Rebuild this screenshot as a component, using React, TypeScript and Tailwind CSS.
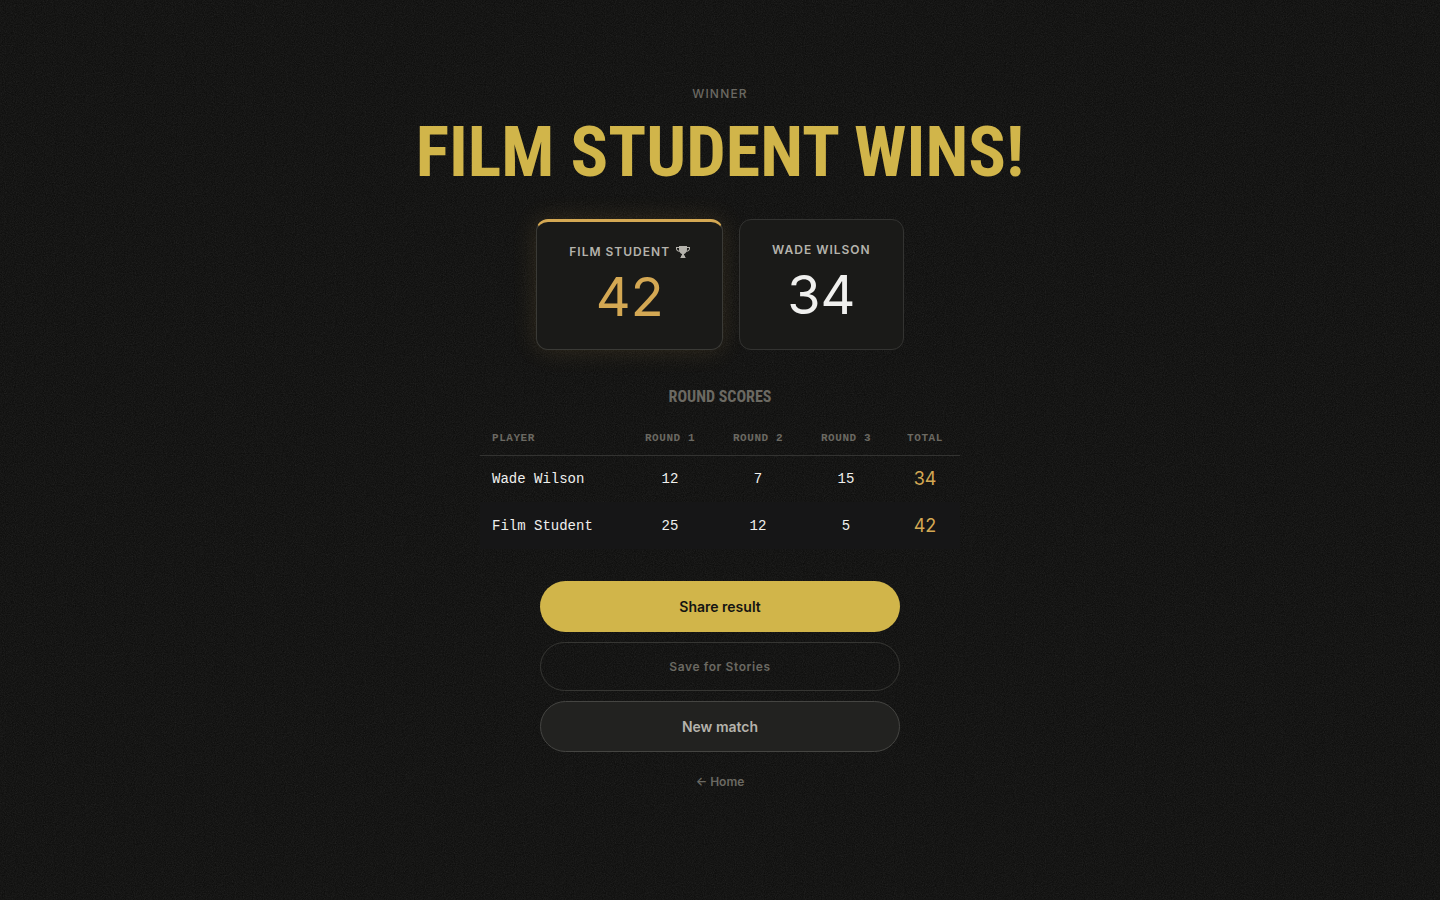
import { useState } from 'react'

interface Player {
  name: string
  rounds: number[]
}

const players: Player[] = [
  { name: 'Wade Wilson', rounds: [12, 7, 15] },
  { name: 'Film Student', rounds: [25, 12, 5] },
]

const total = (player: Player) => player.rounds.reduce((sum, n) => sum + n, 0)

function Trophy() {
  return (
    <svg viewBox="0 0 14 12" className="w-3.5 h-3" fill="currentColor" aria-hidden="true">
      <path d="M3 0h8v1h3v1.500c0 1.900-1.300 3-3.500 3.300C9.900 7 9 7.700 8 8v1.500h1V11h.5v1h-5v-1H5V9.500h1V8C5 7.700 4.100 7 3.500 5.800 1.300 5.500 0 4.400 0 2.500V1h3V0Zm0 2H1v.5c0 1.100.7 1.900 2.100 2.200C3 4 3 3 3 2Zm8 0c0 1 0 2-.1 2.700C12.300 4.400 13 3.600 13 2.500V2h-2Z" />
    </svg>
  )
}

// Film grain over the page background
function Grain() {
  return (
    <svg className="pointer-events-none absolute inset-0 -z-10 h-full w-full opacity-12" aria-hidden="true">
      <filter id="grain" x="0" y="0" width="100%" height="100%">
        <feTurbulence type="fractalNoise" baseFrequency="0.9" numOctaves="4" stitchTiles="stitch" />
        <feColorMatrix type="saturate" values="0" />
      </filter>
      <rect width="100%" height="100%" filter="url(#grain)" />
    </svg>
  )
}

function ScoreCard({ player, winner }: { player: Player; winner: boolean }) {
  return (
    <div
      className={`rounded-xl border bg-[#1a1a18] px-8 pt-5 pb-[17px] text-center ${
        winner
          ? 'border-[#3a3a36] border-t-[3px] border-t-[#d4a853] shadow-[0_0_24px_rgba(212,168,83,0.15)]'
          : 'border-[#333331]'
      }`}
    >
      <div className="flex items-center justify-center gap-1.5 text-xs leading-5 font-semibold tracking-[1px] text-[#b5b3ac]">
        {player.name.toUpperCase()}
        {winner && <Trophy />}
      </div>
      <div className={`text-[54px] leading-[70px] ${winner ? 'text-[#d4a853]' : 'text-[#f0f0ee]'}`}>
        {total(player)}
      </div>
    </div>
  )
}

export default function App() {
  const [shared, setShared] = useState(false)
  const winner = players.reduce((best, p) => (total(p) > total(best) ? p : best))
  const ranking = [...players].sort((a, b) => total(b) - total(a))

  return (
    <main className="relative isolate min-h-screen bg-[#0b0b0a] px-6 pt-21 pb-24 flex flex-col items-center font-['Inter',sans-serif]">
      <Grain />

      {/* Winner */}
      <p className="text-xs leading-5 font-medium tracking-widest text-[#6b6962]">WINNER</p>
      <h1 className="mt-2 text-center text-[70px] leading-20 font-bold text-[#d1b54a] font-['Roboto_Condensed','Liberation_Sans_Narrow',sans-serif]">
        {winner.name.toUpperCase()} WINS!
      </h1>

      {/* Final scores */}
      <div className="mt-[27px] flex gap-4">
        {ranking.map((player) => (
          <ScoreCard key={player.name} player={player} winner={player === winner} />
        ))}
      </div>

      {/* Round scores */}
      <section className="mt-9 w-full max-w-120">
        <h2 className="text-center text-base leading-[22px] font-bold text-[#6b6962] font-['Roboto_Condensed','Liberation_Sans_Narrow',sans-serif]">
          ROUND SCORES
        </h2>
        <table className="mt-[15px] w-full table-fixed font-['Liberation_Mono',monospace] text-sm text-[#f0f0ee]">
          <thead>
            <tr className="h-8 border-b border-[#333331] text-[11px] tracking-wider text-[#6b6962]">
              <th scope="col" className="w-[146px] px-3 text-left">PLAYER</th>
              {winner.rounds.map((_, i) => (
                <th key={i} scope="col">ROUND {i + 1}</th>
              ))}
              <th scope="col" className="w-[70px]">TOTAL</th>
            </tr>
          </thead>
          <tbody>
            {players.map((player) => (
              <tr key={player.name} className="h-[47px] text-center even:bg-[#161617]">
                <td className="px-3 text-left">{player.name}</td>
                {player.rounds.map((score, i) => (
                  <td key={i}>{score}</td>
                ))}
                <td className="font-['Inter',sans-serif] text-lg text-[#d4a853]">{total(player)}</td>
              </tr>
            ))}
          </tbody>
        </table>
      </section>

      {/* Actions */}
      <div className="mt-8 flex w-full max-w-90 flex-col gap-2.5">
        <button
          onClick={() => setShared(!shared)}
          className="h-[51px] rounded-full bg-[#d1b54a] text-sm font-semibold text-[#141412]"
        >
          Share result
        </button>
        <button className="h-[49px] rounded-full border border-[#363633] text-xs font-semibold tracking-wider text-[#6b6962]">
          Save for Stories
        </button>
        <button className="h-[51px] rounded-full border border-[#454542] bg-[#222220] text-sm font-semibold text-[#b5b3ac]">
          New match
        </button>
      </div>
      <a href="#" className="mt-5 text-xs leading-5 font-semibold text-[#6b6962]">
        ← Home
      </a>
    </main>
  )
}
